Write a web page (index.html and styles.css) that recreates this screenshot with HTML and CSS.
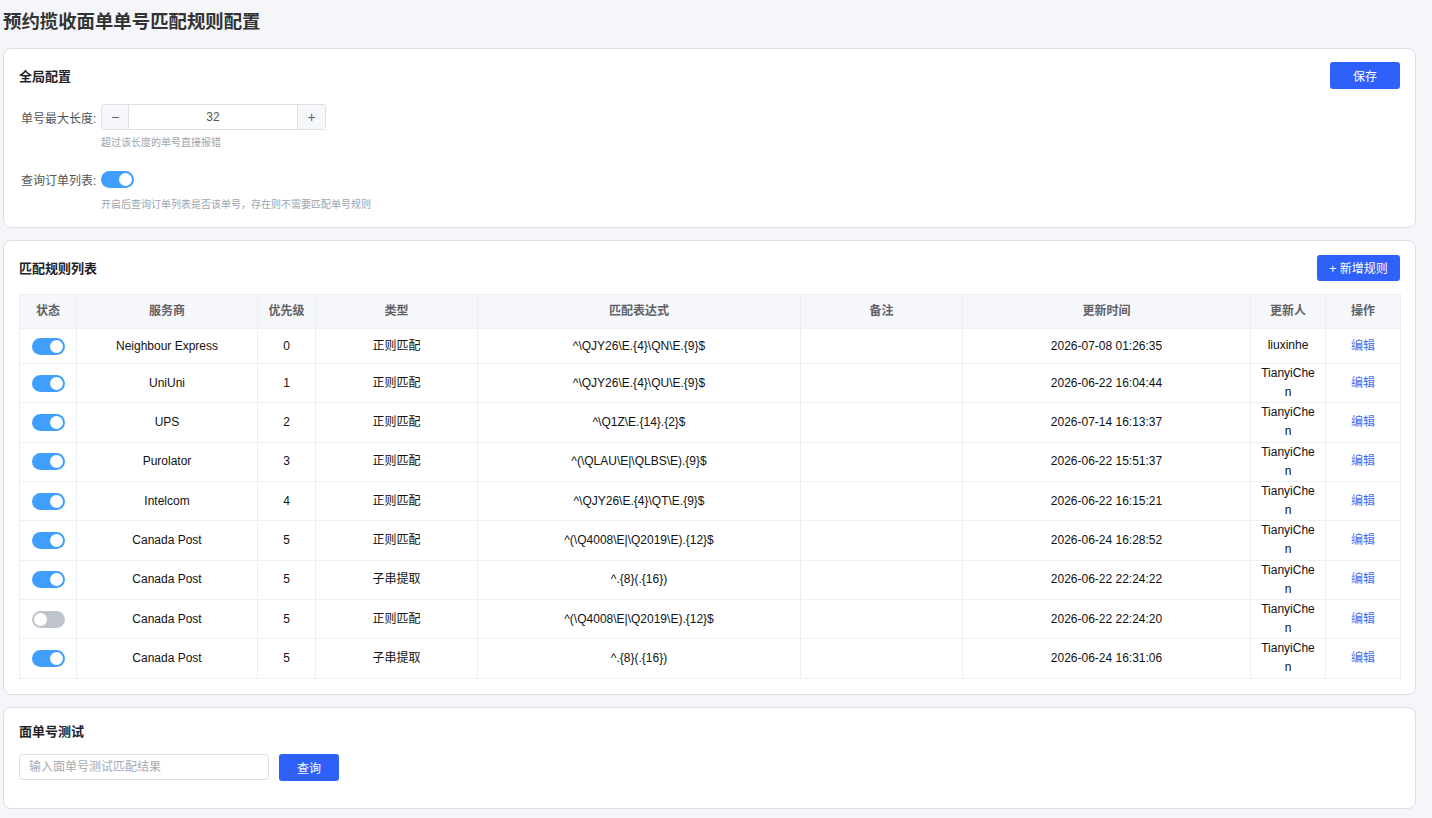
FILE: index.html
```html
<html>
    <head>
        <title>预约揽收面单单号匹配规则配置</title>
        <meta charset="UTF-8">
        <meta name="viewport" content="width=device-width, initial-scale=1.0">
        <link rel="stylesheet" href="styles.css">
    </head>
    <body>
        <div class="page">
            <h1 class="page-title">预约揽收面单单号匹配规则配置</h1>

            <section class="card global-card">
                <div class="card-header">
                    <h2 class="card-title">全局配置</h2>
                    <button class="btn btn-primary btn-save">保存</button>
                </div>
                <div class="form-item">
                    <div class="form-row">
                        <label class="form-label">单号最大长度:</label>
                        <div class="input-number">
                            <span class="num-btn num-minus">&minus;</span>
                            <span class="num-value">32</span>
                            <span class="num-btn num-plus">+</span>
                        </div>
                    </div>
                    <div class="form-hint">超过该长度的单号直接报错</div>
                </div>
                <div class="form-item">
                    <div class="form-row">
                        <label class="form-label">查询订单列表:</label>
                        <span class="switch on"></span>
                    </div>
                    <div class="form-hint">开启后查询订单列表是否该单号，存在则不需要匹配单号规则</div>
                </div>
            </section>

            <section class="card rules-card">
                <div class="card-header">
                    <h2 class="card-title">匹配规则列表</h2>
                    <button class="btn btn-primary btn-add">+ 新增规则</button>
                </div>
                <table class="rule-table">
                    <colgroup>
                        <col style="width:57px">
                        <col style="width:181px">
                        <col style="width:58px">
                        <col style="width:162px">
                        <col style="width:323px">
                        <col style="width:162px">
                        <col style="width:288px">
                        <col style="width:75px">
                        <col style="width:75px">
                    </colgroup>
                    <thead>
                        <tr>
                            <th>状态</th>
                            <th>服务商</th>
                            <th>优先级</th>
                            <th>类型</th>
                            <th>匹配表达式</th>
                            <th>备注</th>
                            <th>更新时间</th>
                            <th>更新人</th>
                            <th>操作</th>
                        </tr>
                    </thead>
                    <tbody id="rule-body"></tbody>
                </table>
            </section>

            <section class="card test-card">
                <div class="card-header">
                    <h2 class="card-title">面单号测试</h2>
                </div>
                <div class="test-row">
                    <input class="test-input" type="text" placeholder="输入面单号测试匹配结果">
                    <button class="btn btn-primary btn-query">查询</button>
                </div>
            </section>
        </div>

        <script>
const rules = [
    { on: true,  carrier: 'Neighbour Express', priority: 0, type: '正则匹配', expr: '^\\QJY26\\E.{4}\\QN\\E.{9}$', time: '2026-07-08 01:26:35', user: 'liuxinhe' },
    { on: true,  carrier: 'UniUni',      priority: 1, type: '正则匹配', expr: '^\\QJY26\\E.{4}\\QU\\E.{9}$', time: '2026-06-22 16:04:44', user: 'TianyiChen' },
    { on: true,  carrier: 'UPS',         priority: 2, type: '正则匹配', expr: '^\\Q1Z\\E.{14}.{2}$', time: '2026-07-14 16:13:37', user: 'TianyiChen' },
    { on: true,  carrier: 'Purolator',   priority: 3, type: '正则匹配', expr: '^(\\QLAU\\E|\\QLBS\\E).{9}$', time: '2026-06-22 15:51:37', user: 'TianyiChen' },
    { on: true,  carrier: 'Intelcom',    priority: 4, type: '正则匹配', expr: '^\\QJY26\\E.{4}\\QT\\E.{9}$', time: '2026-06-22 16:15:21', user: 'TianyiChen' },
    { on: true,  carrier: 'Canada Post', priority: 5, type: '正则匹配', expr: '^(\\Q4008\\E|\\Q2019\\E).{12}$', time: '2026-06-24 16:28:52', user: 'TianyiChen' },
    { on: true,  carrier: 'Canada Post', priority: 5, type: '子串提取', expr: '^.{8}(.{16})', time: '2026-06-22 22:24:22', user: 'TianyiChen' },
    { on: false, carrier: 'Canada Post', priority: 5, type: '正则匹配', expr: '^(\\Q4008\\E|\\Q2019\\E).{12}$', time: '2026-06-22 22:24:20', user: 'TianyiChen' },
    { on: true,  carrier: 'Canada Post', priority: 5, type: '子串提取', expr: '^.{8}(.{16})', time: '2026-06-24 16:31:06', user: 'TianyiChen' }
];

const body = document.getElementById('rule-body');
rules.forEach(rule => {
    const tr = document.createElement('tr');
    const cells = [
        '<span class="switch ' + (rule.on ? 'on' : '') + '"></span>',
        rule.carrier,
        rule.priority,
        rule.type,
        rule.expr,
        '',
        rule.time
    ];
    cells.forEach(html => {
        const td = document.createElement('td');
        td.innerHTML = html;
        tr.appendChild(td);
    });
    const user = document.createElement('td');
    user.className = 'cell-user';
    user.textContent = rule.user;
    tr.appendChild(user);
    const op = document.createElement('td');
    op.innerHTML = '<a class="link-edit">编辑</a>';
    tr.appendChild(op);
    body.appendChild(tr);
});
</script>
    </body>
</html>
```

FILE: styles.css
```css
body {
    margin: 0;
    padding: 0;
    background-color: #f5f6f9;
    font-family: "Liberation Sans", "Noto Sans CJK SC", sans-serif;
    color: #1f1f1f;
}
.page {
    width: 1413px;
    padding: 8px 16px 12px 3px;
}
.page-title {
    margin: 0 0 12px 0;
    font-size: 18.4px;
    line-height: 28px;
    font-weight: bold;
    color: #333;
}
.card {
    background-color: #fff;
    border: 1px solid #dcdfe6;
    border-radius: 8px;
    padding: 13px 15px 15px 15px;
    margin-bottom: 13px;
}
.card-header {
    display: flex;
    justify-content: space-between;
    align-items: center;
    height: 27px;
}
.card-title {
    margin: 0;
    font-size: 13px;
    font-weight: bold;
    color: #1f2329;
}
.btn {
    border: none;
    border-radius: 3px;
    cursor: pointer;
    font-family: inherit;
    font-size: 12px;
}
.btn-primary {
    background-color: #3060fa;
    color: #fff;
}
.btn-save {
    width: 70px;
    height: 27px;
}
.btn-add {
    width: 83px;
    height: 26px;
}
.global-card {
    padding-bottom: 15px;
    margin-bottom: 12px;
}
.global-card .card-header {
    margin-bottom: 15px;
}
.form-item {
    margin-bottom: 16px;
}
.form-item:last-child {
    margin-bottom: 0;
}
.form-row {
    display: flex;
    align-items: center;
    height: 26px;
}
.form-label {
    width: 80px;
    padding-left: 2px;
    font-size: 12px;
    color: #555;
}
.form-hint {
    margin: 6px 0 0 82px;
    font-size: 10px;
    line-height: 14px;
    color: #a0a4ab;
}
.input-number {
    display: flex;
    width: 223px;
    height: 24px;
    border: 1px solid #dcdfe6;
    border-radius: 3px;
    font-size: 12px;
}
.num-btn {
    width: 26px;
    display: flex;
    align-items: center;
    justify-content: center;
    background-color: #f5f7fa;
    color: #606266;
    font-size: 14px;
}
.num-minus {
    border-right: 1px solid #dcdfe6;
}
.num-plus {
    width: 27px;
    border-left: 1px solid #dcdfe6;
}
.num-value {
    flex: 1;
    display: flex;
    align-items: center;
    justify-content: center;
    color: #555;
}
.switch {
    display: inline-block;
    position: relative;
    width: 33px;
    height: 17px;
    border-radius: 9px;
    background-color: #c0c4cc;
    vertical-align: middle;
}
.switch::after {
    content: "";
    position: absolute;
    top: 2px;
    left: 2px;
    width: 13px;
    height: 13px;
    border-radius: 50%;
    background-color: #fff;
}
.switch.on {
    background-color: #409eff;
}
.switch.on::after {
    left: 18px;
}
.rules-card {
    padding-top: 13px;
    padding-bottom: 15px;
    margin-bottom: 12px;
}
.rules-card .card-header {
    margin-bottom: 13px;
}
.rule-table {
    width: 1381px;
    table-layout: fixed;
    border-collapse: collapse;
    font-size: 12px;
}
.rule-table th,
.rule-table td {
    border: 1px solid #ebeef5;
    text-align: center;
    padding: 7.5px 8px;
    line-height: 19px;
}
.rule-table th {
    padding: 7px 8px;
    background-color: #f5f7fa;
    color: #606266;
    font-weight: bold;
}
.rule-table td {
    color: #111;
}
.rule-table td.cell-user {
    padding: 0 8px;
    line-height: 19.15px;
    word-break: break-all;
}
.link-edit {
    color: #3f6ff5;
    cursor: pointer;
}
.test-card {
    padding-top: 9px;
    padding-bottom: 27px;
}
.test-card .card-header {
    margin-bottom: 10px;
}
.test-row {
    display: flex;
    gap: 10px;
}
.test-input {
    width: 250px;
    height: 26px;
    box-sizing: border-box;
    border: 1px solid #dcdfe6;
    border-radius: 3px;
    padding: 0 9px;
    font-family: inherit;
    font-size: 12px;
}
.test-input::placeholder {
    color: #a8abb2;
}
.btn-query {
    width: 60px;
    height: 27px;
}
```
